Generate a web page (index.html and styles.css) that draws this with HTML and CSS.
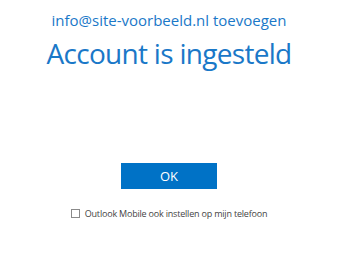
FILE: index.html
```html
<!DOCTYPE html>
<html lang="nl">
<head>
<meta charset="utf-8">
<title>Account is ingesteld</title>
<link rel="stylesheet" href="styles.css">
</head>
<body>
<main class="page">
  <p class="email">info@site-voorbeeld.nl toevoegen</p>
  <h1 class="title">Account is ingesteld</h1>
  <button class="ok" type="button">OK</button>
  <label class="check">
    <span class="box"></span>
    <span class="label-text">Outlook Mobile ook instellen op mijn telefoon</span>
  </label>
</main>
</body>
</html>
```

FILE: styles.css
```css
html, body {
  margin: 0;
  padding: 0;
  background: #ffffff;
}
.page {
  width: 338px;
  display: flex;
  flex-direction: column;
  align-items: center;
  font-family: "Open Sans", "Noto Sans", sans-serif;
}
.email {
  margin: 10px 0 0 0;
  font-size: 15px;
  line-height: 20px;
  color: #1a78c8;
}
.title {
  margin: 5px 0 0 0;
  font-size: 28px;
  font-weight: 400;
  letter-spacing: -0.7px;
  line-height: 36px;
  color: #1a78c8;
}
.ok {
  margin-top: 92px;
  width: 96px;
  height: 26px;
  border: none;
  background: #0072c6;
  color: #ffffff;
  font-family: inherit;
  font-size: 13px;
  padding: 0;
}
.check {
  margin-top: 18px;
  display: flex;
  align-items: center;
  gap: 5px;
  font-size: 9px;
  letter-spacing: -0.2px;
  color: #444444;
}
.box {
  width: 7px;
  height: 7px;
  border: 1px solid #8a8a8a;
  background: #fff;
}
```
